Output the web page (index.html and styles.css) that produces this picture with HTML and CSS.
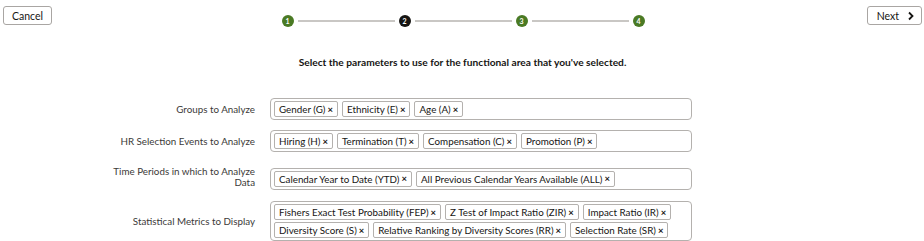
FILE: index.html
```html
<!DOCTYPE html>
<html>
<head>
    <title>Select Parameters</title>
    <link rel="stylesheet" href="styles.css">
</head>
<body>

<div class="top-bar">
    <div class="left">
        <button class="btn">Cancel</button>
    </div>
    <div class="stepper">
        <span class="step done">1</span>
        <span class="line"></span>
        <span class="step current">2</span>
        <span class="line"></span>
        <span class="step done">3</span>
        <span class="line"></span>
        <span class="step done">4</span>
    </div>
    <div class="right">
        <button class="btn btn-next">Next
            <svg width="8" height="10" viewBox="0 0 8 10"><path d="M2 1.5 L5.5 5 L2 8.5" fill="none" stroke="#161513" stroke-width="1.8"/></svg>
        </button>
    </div>
</div>

<h3 class="intro">Select the parameters to use for the functional area that you've selected.</h3>

<div class="form">
    <div class="row">
        <label>Groups to Analyze</label>
        <div class="field">
            <span class="chip">Gender (G) <i>×</i></span>
            <span class="chip">Ethnicity (E) <i>×</i></span>
            <span class="chip">Age (A) <i>×</i></span>
        </div>
    </div>
    <div class="row">
        <label>HR Selection Events to Analyze</label>
        <div class="field">
            <span class="chip">Hiring (H) <i>×</i></span>
            <span class="chip">Termination (T) <i>×</i></span>
            <span class="chip">Compensation (C) <i>×</i></span>
            <span class="chip">Promotion (P) <i>×</i></span>
        </div>
    </div>
    <div class="row row-tall">
        <label>Time Periods in which to Analyze Data</label>
        <div class="field">
            <span class="chip">Calendar Year to Date (YTD) <i>×</i></span>
            <span class="chip">All Previous Calendar Years Available (ALL) <i>×</i></span>
        </div>
    </div>
    <div class="row">
        <label>Statistical Metrics to Display</label>
        <div class="field">
            <span class="chip">Fishers Exact Test Probability (FEP) <i>×</i></span>
            <span class="chip">Z Test of Impact Ratio (ZIR) <i>×</i></span>
            <span class="chip">Impact Ratio (IR) <i>×</i></span>
            <span class="chip">Diversity Score (S) <i>×</i></span>
            <span class="chip">Relative Ranking by Diversity Scores (RR) <i>×</i></span>
            <span class="chip">Selection Rate (SR) <i>×</i></span>
        </div>
    </div>
</div>

</body>
</html>
```

FILE: styles.css
```css
body {
    margin: 0;
    font-family: Lato, sans-serif;
    color: #161513;
    background: #fff;
}

.top-bar {
    display: grid;
    grid-template-columns: 1fr auto 1fr;
    align-items: start;
    padding: 6px 2px 0 3px;
}

.right {
    display: flex;
    justify-content: flex-end;
}

.btn {
    font-family: inherit;
    font-size: 10.5px;
    color: #161513;
    background: #fff;
    border: 1px solid #a9a6a3;
    border-radius: 3px;
    height: 19px;
    padding: 0 8px;
    display: flex;
    align-items: center;
    gap: 8px;
}

.btn-next {
    padding: 0 6px 0 9px;
}

.stepper {
    display: flex;
    align-items: center;
    margin: 9px 0 0 1px;
}

.step {
    width: 12px;
    height: 12px;
    border-radius: 50%;
    color: #fff;
    font-size: 7px;
    font-weight: bold;
    display: flex;
    align-items: center;
    justify-content: center;
}

.step.done {
    background: #4a7a24;
}

.step.current {
    background: #161513;
}

.line {
    width: 97px;
    height: 2px;
    margin: 0 4px;
    background: #c9c7c4;
}

.intro {
    text-align: center;
    font-size: 10.2px;
    font-weight: bold;
    margin: 29px 0 30px 1px;
}

.form {
    display: flex;
    flex-direction: column;
    gap: 10px;
}

.row {
    display: flex;
    align-items: center;
    gap: 15px;
}

.row-tall {
    margin-top: 4px;
}

.row label {
    width: 255px;
    text-align: right;
    font-size: 9.8px;
    line-height: 12px;
    color: #3b3a38;
    padding-left: 100px;
    box-sizing: border-box;
}

.row-tall label {
    line-height: 11px;
    padding-bottom: 3px;
}

.field {
    width: 422px;
    box-sizing: border-box;
    border: 1px solid #b4b1ae;
    border-radius: 4px;
    padding: 2px 3px;
    display: flex;
    flex-wrap: wrap;
    gap: 2px 4px;
}

.chip {
    height: 16px;
    box-sizing: border-box;
    display: flex;
    align-items: center;
    gap: 2px;
    font-size: 9.8px;
    border: 1px solid #b4b1ae;
    border-radius: 2px;
    padding: 0 4px;
    color: #161513;
    white-space: nowrap;
}

.chip i {
    font-style: normal;
    font-weight: bold;
    font-size: 9.5px;
}
```
